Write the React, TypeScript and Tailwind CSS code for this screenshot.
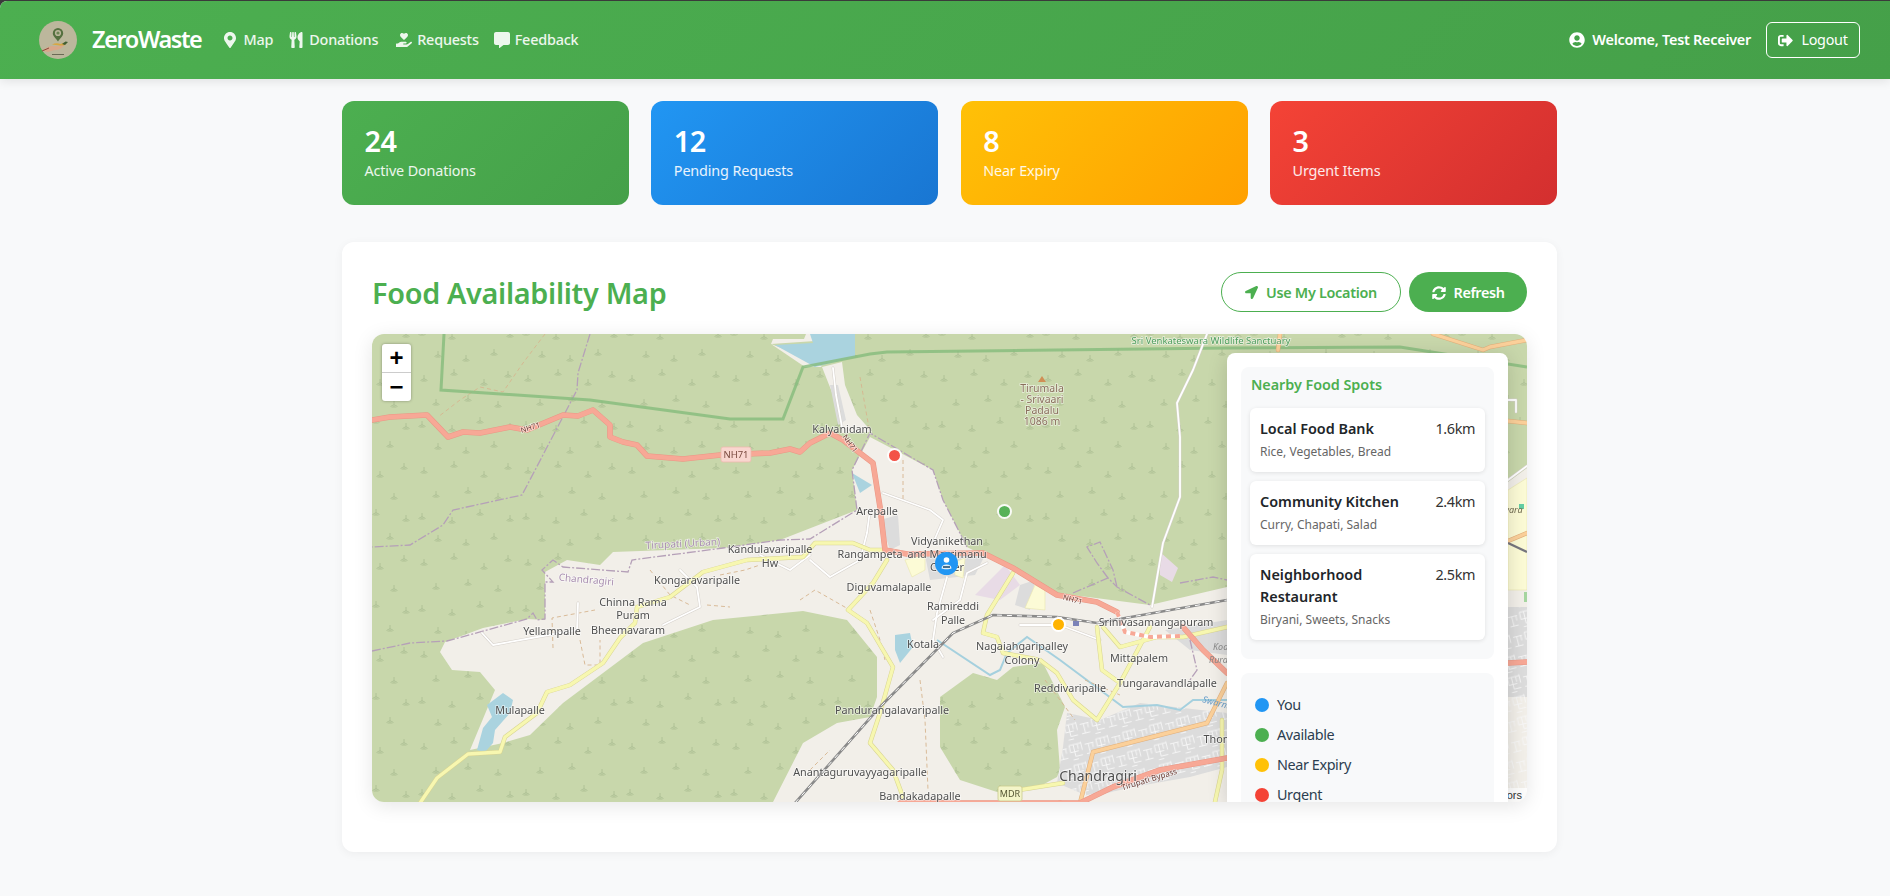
import {
  FaCommentAlt,
  FaHandHoldingHeart,
  FaLocationArrow,
  FaMapMarkerAlt,
  FaSignOutAlt,
  FaSyncAlt,
  FaUserCircle,
  FaUtensils,
} from 'react-icons/fa';

const stats = [
  { value: '24', label: 'Active Donations', bg: 'bg-[linear-gradient(135deg,#4caf50,#45a049)]' },
  { value: '12', label: 'Pending Requests', bg: 'bg-[linear-gradient(135deg,#2196f3,#1976d2)]' },
  { value: '8', label: 'Near Expiry', bg: 'bg-[linear-gradient(135deg,#ffc107,#ffa000)]' },
  { value: '3', label: 'Urgent Items', bg: 'bg-[linear-gradient(135deg,#f44336,#d32f2f)]' },
];

const spots = [
  { name: 'Local Food Bank', km: '1.6km', items: 'Rice, Vegetables, Bread' },
  { name: 'Community Kitchen', km: '2.4km', items: 'Curry, Chapati, Salad' },
  { name: 'Neighborhood Restaurant', km: '2.5km', items: 'Biryani, Sweets, Snacks' },
];

const legend = [
  { label: 'You', dot: 'bg-[#2196f3]' },
  { label: 'Available', dot: 'bg-[#4caf50]' },
  { label: 'Near Expiry', dot: 'bg-[#ffc107]' },
  { label: 'Urgent', dot: 'bg-[#f44336]' },
];

// map geometry is written in page coordinates, the svg viewBox starts at the map's corner
const land =
  '440,652 445,642 483,628 527,619 545,620 545,572 567,560 600,565 613,552 723,548 780,540 857,510 852,470 870,437 933,470 943,500 967,547 1057,593 1150,605 1227,587 1400,520 1508,482 1527,468 1527,802 773,802 803,743 837,723 870,717 877,697 877,657 847,620 803,611 713,620 643,643 563,703 530,735 503,743 470,750 495,690 480,672 452,670';
const damLand = [
  '771,344 815,341 812,334 806,334 804,339 773,339',
  '771,344 805,367 822,367 812,360',
  '822,367 842,362 845,385 857,415 872,432 842,433 835,400',
];
const forestBlob =
  '940,697 973,673 997,680 1013,667 1043,663 1065,707 1057,730 1060,770 1057,777 1033,790 997,792 960,780 940,747';
const residential =
  '1067,713 1100,720 1140,703 1227,713 1227,767 1190,777 1133,787 1090,797 1057,783 1063,747';
const water = [
  '775,345 813,343 810,334 855,334 855,357 815,367',
  '852,473 872,485 860,493',
  '895,635 910,633 913,647 900,663 895,650',
  '487,705 503,693 513,700 510,713 495,730 493,743 485,752 477,750 483,728 492,717',
];
const grey = [
  '830,385 838,385 846,420 838,425',
  '880,520 898,515 900,545 890,550',
  '925,555 985,555 975,575 930,580',
  '1165,630 1227,620 1227,655 1190,650',
  '1508,607 1527,607 1527,697 1508,697',
  '1020,585 1035,580 1030,610 1015,605',
];
const lilac = ['975,595 1005,565 1020,585 1000,600', '1160,552 1178,568 1172,582 1160,575'];
const paleYellow = [
  '905,560 925,555 925,570 912,577',
  '1035,585 1045,590 1045,610 1025,608',
  '955,562 965,558 963,578 955,575',
  '1508,490 1527,478 1527,590 1508,590',
];

const nh71 =
  '372,420 390,417 427,415 448,437 463,432 480,433 510,427 527,430 563,415 578,416 593,410 610,425 610,437 623,442 637,445 647,456 683,459 720,455 770,453 790,449 800,452 810,443 830,433 843,440 873,463 880,507 885,550 907,554 983,553 1013,568 1057,595 1097,602 1117,612';
const redRoads = [
  nh71,
  '1183,627 1203,650 1227,673',
  '1060,803 1080,803 1113,787 1160,770 1227,758',
  '900,803 1060,803',
  '1508,663 1527,662',
];
const orangeRoads = [
  '1080,803 1093,752 1207,723 1227,683',
  '1433,334 1483,350 1490,347 1527,340',
  '1280,334 1278,350',
  '1508,421 1527,423',
  '1508,541 1527,533',
];
const yellowRoads = [
  '420,803 437,778 468,754 500,752 505,737 537,713 547,692 570,685 603,663 620,638 635,623 637,607 670,597 703,572 747,560 803,557 815,543 853,543 870,550 885,550',
  '887,560 873,583 848,610 867,623 893,667 880,713 870,743 893,770 903,797',
  '1013,573 987,615 983,633 997,637 1003,653 1040,660 1057,673 1073,700 1097,720 1120,683 1150,627',
  '1097,627 1102,670 1120,683',
  '1103,627 1120,647 1157,637 1183,637 1227,627',
  '1000,793 1063,783',
  '1222,720 1222,770 1215,802',
];
const whiteRoads = [
  '1207,334 1193,370 1177,403 1180,437 1180,497 1163,543 1152,607',
  '947,577 937,613 933,640 943,657',
  '987,563 967,573 960,600 933,620',
  '883,493 930,510 943,520 933,543',
  '810,560 830,577 860,560 867,533 870,510',
  '482,633 493,645 537,637 577,630 578,603',
  '663,625 700,607 697,587 680,570',
  '833,368 836,395 842,427',
  '1508,480 1527,466',
  '1507,400 1516,400 1516,412 M1516,404 1527,404',
  '1020,625 1060,625 1100,640',
  '760,555 790,570 810,555',
];
const tracks = [
  '545,334 523,363 503,392 480,387 460,400 438,417',
  '903,460 903,500',
  '860,377 867,417 870,433',
  '650,570 670,595 690,605',
  '720,575 745,570 760,565',
  '800,600 815,590 850,610',
  '707,605 730,607',
  '553,648 552,618 595,610',
  '580,640 585,665 600,665 600,640',
  '870,610 880,640 885,660',
  '920,680 925,720 928,790',
  '1085,680 1120,695',
  '810,770 830,750',
  '1045,680 1075,720',
];
const boundaries = [
  '590,334 578,373 577,390 522,495 453,510 443,525 410,545 372,547',
  '372,651 410,643 447,641 527,619 533,613 537,620 545,619 545,582 553,582 542,570 553,560 563,567 628,572 632,560 723,548 780,540 810,539 857,510 852,470 870,433 933,470 943,500 967,547',
  '1073,593 1108,578 1117,587 1150,605',
  '1108,578 1097,563 1087,547 1100,542 1113,570 1117,587',
  '1180,583 1213,577 1227,580',
  '1190,640 1197,670 1190,680',
];
const rail = '795,803 880,707 953,633 993,615 1057,617 1097,623 1227,600';
const dashedLink = '1117,612 1125,632 1150,637 1180,636';

type Label = [string, number, number, number?, string?, number?];
const labels: Label[] = [
  ['Kalyanidam', 842, 433],
  ['Tirumala', 1042, 392, 10.5, '#8a6f5c'],
  ['- Srivaari', 1042, 403, 10.5, '#8a6f5c'],
  ['Padalu', 1042, 414, 10.5, '#8a6f5c'],
  ['1086 m', 1042, 425, 10.5, '#8a6f5c'],
  ['Arepalle', 877, 515],
  ['Vidyanikethan', 947, 545],
  ['and Marrimanu', 947, 558],
  ['Center', 947, 571],
  ['Rangampeta', 870, 558],
  ['Diguvamalapalle', 889, 591],
  ['Ramireddi', 953, 610],
  ['Palle', 953, 624],
  ['Kotala', 923, 648],
  ['Nagaiahgaripalley', 1022, 650],
  ['Colony', 1022, 664],
  ['Srinivasamangapuram', 1156, 626],
  ['Mittapalem', 1139, 662],
  ['Tungaravandlapalle', 1167, 687],
  ['Reddivaripalle', 1070, 692],
  ['Pandurangalavaripalle', 892, 714],
  ['Anantaguruvayyagaripalle', 860, 776],
  ['Bandakadapalle', 920, 800],
  ['Chandragiri', 1098, 781, 14],
  ['Thondavada', 1235, 743],
  ['Kandulavaripalle', 770, 553],
  ['Hw', 770, 567],
  ['Kongaravaripalle', 697, 584],
  ['Chinna Rama', 633, 606],
  ['Puram', 633, 619],
  ['Bheemavaram', 628, 634],
  ['Yellampalle', 552, 635],
  ['Mulapalle', 520, 714],
  ['Tirupati (Urban)', 683, 547, 10, '#a98fb0', -3],
  ['Chandragiri', 586, 583, 10, '#a98fb0', 5],
  ['Sri Venkateswara Wildlife Sanctuary', 1211, 344, 9.5, '#4d9e5c'],
  ['Tirupati Bypass', 1150, 782, 8, '#6b3b33', -17],
  ['NH71', 531, 430, 7.5, '#6b3b33', -17],
  ['NH71', 848, 445, 7.5, '#6b3b33', 55],
  ['NH71', 1072, 602, 7.5, '#6b3b33', 15],
];

const treeSpots = [
  [8, 10], [38, 4], [68, 14], [92, 6], [20, 34], [52, 30], [82, 36], [6, 56], [36, 60], [64, 52], [94, 58], [22, 78], [50, 82], [78, 76],
];

function Roads({ list, casing, fill, w }: { list: string[]; casing: string; fill: string; w: number }) {
  return (
    <>
      {list.map((p) => (
        <polyline key={p} points={p} fill="none" stroke={casing} strokeWidth={w + 1} strokeLinejoin="round" strokeLinecap="round" />
      ))}
      {list.map((p) => (
        <polyline key={p} points={p} fill="none" stroke={fill} strokeWidth={w} strokeLinejoin="round" strokeLinecap="round" />
      ))}
    </>
  );
}

function MapTiles() {
  return (
    <svg viewBox="372 334 1155 468" className="block h-full w-full blur-[0.4px]">
      <defs>
        <pattern id="trees" width="104" height="92" patternUnits="userSpaceOnUse">
          {treeSpots.map(([x, y]) => (
            <path
              key={`${x}-${y}`}
              d={`M${x} ${y - 3}v6M${x - 3.5} ${y + 2.5}l3.5 -2l3.5 2M${x - 2.5} ${y + 3}h5`}
              stroke="#b0c296"
              strokeWidth="1"
              fill="none"
            />
          ))}
        </pattern>
        <pattern id="streets" width="46" height="34" patternUnits="userSpaceOnUse" patternTransform="rotate(-14) scale(0.6)">
          <path
            d="M2 5h20M2 5v12M9 5v20M16 5v9M2 17h14M22 3v14M28 9h15M34 9v16M41 9v8M9 25h12M28 25h14M4 30h9"
            stroke="#f7f7f7"
            strokeWidth="1.5"
            fill="none"
          />
        </pattern>
      </defs>

      <rect x="372" y="334" width="1155" height="468" fill="#c8d7ab" />
      <rect x="372" y="334" width="1155" height="468" fill="url(#trees)" />
      <polygon points={land} fill="#f2efe9" />
      {damLand.map((p) => (
        <polygon key={p} points={p} fill="#f2efe9" />
      ))}
      <polygon points={forestBlob} fill="#c8d7ab" />
      <polygon points={forestBlob} fill="url(#trees)" />
      <polygon points="1524,592 1527,592 1527,602 1524,602" fill="#a6d6a0" />

      {grey.map((p) => (
        <polygon key={p} points={p} fill="#dcdcdc" />
      ))}
      <polygon points={residential} fill="#dcdcdc" />
      <polygon points={residential} fill="url(#streets)" />
      <rect x="1508" y="607" width="19" height="190" fill="url(#streets)" />
      {lilac.map((p) => (
        <polygon key={p} points={p} fill="#e8dbe6" />
      ))}
      {paleYellow.map((p) => (
        <polygon key={p} points={p} fill="#fcfbd6" stroke="#e9e6ae" strokeWidth="0.6" />
      ))}
      {water.map((p) => (
        <polygon key={p} points={p} fill="#aad3df" />
      ))}
      <polyline
        points="937,640 990,675 1000,670 1007,653 1027,637 1060,660 1123,707 1157,705 1180,710 1193,700 1227,700"
        fill="none"
        stroke="#a5d0de"
        strokeWidth="2"
      />

      {tracks.map((p) => (
        <polyline key={p} points={p} fill="none" stroke="#d6b48e" strokeWidth="0.9" strokeDasharray="4 3" />
      ))}
      {boundaries.map((p) => (
        <polyline key={p} points={p} fill="none" stroke="#b5a0b8" strokeWidth="1.3" strokeDasharray="9 2 2 2" />
      ))}
      <polyline
        points="444,334 441,390 590,400 730,419 783,419 803,367 870,354 887,352 1227,348 1400,347 1527,367"
        fill="none"
        stroke="#84bc7c"
        strokeOpacity="0.8"
        strokeWidth="3"
      />

      <Roads list={whiteRoads} casing="#d6d1cb" fill="#ffffff" w={1.8} />
      <Roads list={yellowRoads} casing="#d8d492" fill="#f7f7b0" w={3.4} />
      <Roads list={orangeRoads} casing="#e0ae7a" fill="#fbd09a" w={3.4} />
      <Roads list={redRoads} casing="#ea9785" fill="#f7a896" w={4.6} />
      <polyline points={dashedLink} fill="none" stroke="#ffffff" strokeWidth="4" />
      <polyline points={dashedLink} fill="none" stroke="#f7a896" strokeWidth="4" strokeDasharray="5 4" />

      <polyline points={rail} fill="none" stroke="#8a8a8a" strokeWidth="2.6" />
      <polyline points={rail} fill="none" stroke="#ffffff" strokeWidth="1" strokeDasharray="5 5" />
      <polyline points="1508,543 1527,552" fill="none" stroke="#76767e" strokeWidth="2.4" />
      <rect x="1073" y="621" width="6" height="5" fill="#7c83b8" />

      <polygon points="1042,376 1038,382 1046,382" fill="#d08f55" />
      <rect x="1519" y="504" width="5" height="5" fill="#63cfa4" />

      <g fontFamily="'Noto Sans', sans-serif">
        {labels.map(([text, x, y, size = 10.8, color = '#4f4f4f', rotate = 0]) => (
          <text
            key={`${text}-${x}`}
            x={x}
            y={y}
            fontSize={size}
            fill={color}
            textAnchor="middle"
            stroke="#ffffff"
            strokeOpacity="0.6"
            strokeWidth="1.5"
            paintOrder="stroke"
            transform={rotate ? `rotate(${rotate} ${x} ${y})` : undefined}
          >
            {text}
          </text>
        ))}
        <text x="1213" y="650" fontSize="9" fontStyle="italic" fill="#888888">Koala</text>
        <text x="1209" y="663" fontSize="9" fontStyle="italic" fill="#888888">Rural</text>
        <text x="1490" y="513" fontSize="9" fontStyle="italic" fill="#6f6a4f">Kalwara</text>
        <text x="1202" y="702" fontSize="9" fontStyle="italic" fill="#6a9ec9" transform="rotate(15 1202 702)">Swarna</text>
      </g>

      <rect x="721" y="447" width="30" height="15" rx="2" fill="#f9d6cf" stroke="#eeb9ad" strokeWidth="0.8" />
      <text x="736" y="458" fontSize="9.5" textAnchor="middle" fontFamily="'Noto Sans', sans-serif" fill="#7a4a3f">NH71</text>
      <rect x="998" y="786" width="24" height="15" rx="2" fill="#f4f5c9" stroke="#c9ca8d" strokeWidth="0.8" />
      <text x="1010" y="797" fontSize="9" textAnchor="middle" fontFamily="'Noto Sans', sans-serif" fill="#555533">MDR</text>
    </svg>
  );
}

function Logo() {
  return (
    <svg viewBox="0 0 38 38" className="h-[38px] w-[38px] shrink-0">
      <circle cx="19" cy="19" r="19" fill="#bcb79c" />
      <path d="M19 7a5.2 5.2 0 0 0-5.2 5.2c0 3.3 3.6 5.6 5.2 8.3 1.6-2.7 5.2-5 5.2-8.3A5.2 5.2 0 0 0 19 7z" fill="#55703f" />
      <circle cx="19" cy="12" r="3.1" fill="#bcb79c" />
      <circle cx="19" cy="12" r="1.6" fill="#6c8553" />
      <path d="M13 23.5c3-1.5 6-1.5 8.5-.5l4-1.5 2 1-3 2.500z" fill="#d9a640" />
      <path d="M23 23l3.5-2.5 2.5.5-3 3z" fill="#3f5f34" />
      <path d="M3 29.5c4-2.5 7-4 10-4.500 4 .5 8 .5 12-1-1.500 3-4.500 4.500-8 5-3 .5-5 .5-8 2z" fill="#d9a78a" />
      <path d="M3 30l7-3" stroke="#8a4a3c" strokeWidth="1" />
      <rect x="13" y="33" width="12" height="1" fill="#6a6a55" />
    </svg>
  );
}

function NavLink({ icon, label, className = '' }: { icon: React.ReactNode; label: string; className?: string }) {
  return (
    <a className={`flex items-center gap-[5px] text-[14.4px] font-medium tracking-[-0.2px] text-white/90 ${className}`}>
      {icon}
      {label}
    </a>
  );
}

export default function App() {
  return (
    <div className="min-h-[896px] bg-[#3a3a3a] pt-px font-['Noto_Sans',sans-serif]">
      <div className="min-h-[895px] overflow-hidden rounded-tl-[7px] bg-[#f8f9fa]">
        <nav className="flex h-[78px] items-center bg-[linear-gradient(135deg,#4caf50,#45a049)] pl-[39px] pr-[30px] shadow-[0_2px_10px_rgba(0,0,0,0.1)]">
          <Logo />
          <span className="ml-[15px] text-[23.5px] font-semibold tracking-[-1.4px] text-white">ZeroWaste</span>
          <div className="ml-[21px] flex items-center gap-[15px]">
            <NavLink icon={<FaMapMarkerAlt size={16} />} label="Map" />
            <NavLink icon={<FaUtensils size={16} />} label="Donations" />
            <NavLink icon={<FaHandHoldingHeart size={16} />} label="Requests" className="ml-[3px]" />
            <NavLink icon={<FaCommentAlt size={16} />} label="Feedback" />
          </div>
          <div className="ml-auto flex items-center gap-[7px] text-[14.4px] font-semibold tracking-[-0.25px] text-white">
            <FaUserCircle size={16} />
            Welcome, Test Receiver
          </div>
          <button className="ml-[15px] flex h-[36px] w-[94px] items-center justify-center gap-[8px] rounded-[6px] border border-white text-[14.4px] tracking-[-0.3px] text-white">
            <FaSignOutAlt size={15} />
            Logout
          </button>
        </nav>

        <main className="ml-[342px] w-[1215px] pt-[22px]">
          <div className="grid grid-cols-4 gap-[22.4px]">
            {stats.map((s) => (
              <div key={s.label} className={`h-[104px] rounded-[12px] px-[22.5px] pt-[21px] text-white ${s.bg}`}>
                <div className="text-[28.8px] leading-[38px] font-semibold tracking-[-0.5px]">{s.value}</div>
                <div className="mt-px text-[14.4px] leading-[20px] tracking-[-0.15px] text-white/90">{s.label}</div>
              </div>
            ))}
          </div>

          <section className="mt-[37px] h-[610px] rounded-[12px] bg-white px-[30px] pt-[30px] shadow-[0_2px_10px_rgba(0,0,0,0.05)]">
            <div className="flex h-[40px] items-center justify-between">
              <h1 className="pt-[2px] text-[28.8px] font-semibold tracking-[-0.3px] text-[#4caf50]">Food Availability Map</h1>
              <div className="flex gap-[8px]">
                <button className="flex h-[40px] w-[180px] items-center justify-center gap-[8px] rounded-full border border-[#4caf50] pt-px text-[14.4px] font-semibold tracking-[-0.3px] text-[#4caf50]">
                  <FaLocationArrow size={13} />
                  Use My Location
                </button>
                <button className="flex h-[40px] w-[118px] items-center justify-center gap-[8px] rounded-full bg-[#4caf50] pt-px text-[14.4px] font-semibold tracking-[-0.4px] text-white">
                  <FaSyncAlt size={14} />
                  Refresh
                </button>
              </div>
            </div>

            <div className="relative mt-[22px] h-[468px] overflow-hidden rounded-[12px] shadow-[0_4px_20px_rgba(0,0,0,0.1)]">
              <MapTiles />

              <div className="absolute left-[10px] top-[10px] w-[29px] overflow-hidden rounded-[3px] bg-white shadow-[0_0_3px_rgba(0,0,0,0.35)]">
                <div className="flex h-[28.5px] items-center justify-center border-b border-[#ccc] font-['Liberation_Sans',sans-serif] text-[24px] font-bold text-black">+</div>
                <div className="flex h-[28.5px] items-center justify-center font-['Liberation_Sans',sans-serif] text-[24px] font-bold text-black">−</div>
              </div>

              <span className="absolute left-[515px] top-[114px] h-[15px] w-[15px] rounded-full border-2 border-white bg-[#f44336] opacity-90" />
              <span className="absolute left-[625px] top-[170px] h-[15px] w-[15px] rounded-full border-2 border-white bg-[#4caf50] opacity-90" />
              <span className="absolute left-[679px] top-[283px] h-[15px] w-[15px] rounded-full border-2 border-white bg-[#ffb300]" />
              <span className="absolute left-[563px] top-[218px] flex h-[23px] w-[23px] items-center justify-center rounded-full bg-[#2196f3]">
                <svg viewBox="0 0 23 23" className="h-[23px] w-[23px]">
                  <circle cx="11.5" cy="8" r="2.8" fill="#ffffff" />
                  <path d="M6.5 16.5c0-2.500 2-4 5-4s5 1.500 5 4c-2 1-8 1-10 0z" fill="#e3eef6" />
                  <rect x="8" y="14" width="7" height="2" fill="#47708f" />
                </svg>
              </span>

              <div className="absolute bottom-0 right-0 bg-white/80 px-[5px] text-[11px] leading-[14px] text-[#333] font-['Liberation_Sans',sans-serif]">
                Leaflet | © OpenStreetMap contributors
              </div>

              <aside className="absolute bottom-0 left-[855px] top-[19px] w-[281px] overflow-hidden rounded-t-[8px] bg-white p-[14px] shadow-[0_4px_20px_rgba(0,0,0,0.15)]">
                <div className="rounded-[8px] bg-[#f8f9fa] px-[9px] pb-[19px] pt-[9px]">
                  <h3 className="pl-px text-[14.4px] leading-[18px] font-semibold tracking-[-0.05px] text-[#4caf50]">Nearby Food Spots</h3>
                  <div className="mt-[14px] flex flex-col gap-[9px]">
                    {spots.map((s) => (
                      <div key={s.name} className="rounded-[6px] bg-white px-[10px] pb-[9px] pt-[10px] shadow-[0_1px_4px_rgba(0,0,0,0.1)]">
                        <div className="flex justify-between gap-[24px]">
                          <span className="text-[14.4px] leading-[22px] font-semibold text-[#212529]">{s.name}</span>
                          <span className="text-[14.4px] leading-[22px] tracking-[-0.4px] text-[#333]">{s.km}</span>
                        </div>
                        <div className="mt-[1px] text-[12px] leading-[22px] text-[#666]">{s.items}</div>
                      </div>
                    ))}
                  </div>
                </div>
                <div className="mt-[14px] h-[200px] rounded-[8px] bg-[#f8f9fa] px-[14px] pt-[22px]">
                  <div className="flex flex-col gap-[10px]">
                    {legend.map((l) => (
                      <div key={l.label} className="flex h-[20px] items-center gap-[8px] text-[14.4px] tracking-[-0.4px] text-[#2c3e50]">
                        <span className={`h-[14px] w-[14px] rounded-full ${l.dot}`} />
                        {l.label}
                      </div>
                    ))}
                  </div>
                </div>
              </aside>
            </div>
          </section>
        </main>
      </div>
    </div>
  );
}
